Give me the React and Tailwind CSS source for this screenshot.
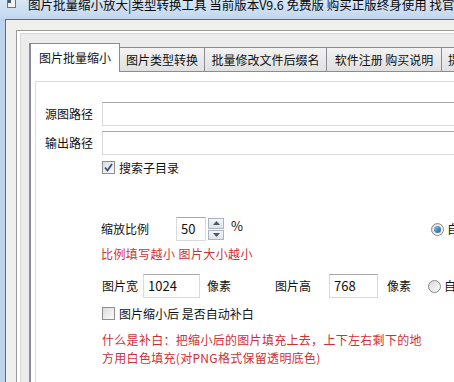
import React from "react";

const font = { fontFamily: '"Noto Sans CJK SC", "Noto Sans", sans-serif' };

const CheckBox = ({ checked }) => (
	<div className="w-[13px] h-[13px] shrink-0 border border-[#8e8f8f] bg-gradient-to-br from-[#dcdcdc] to-[#fbfbfb] flex items-center justify-center">
		{checked && (
			<svg width="11" height="11" viewBox="0 0 11 11">
				<path d="M2 5.5 L4.5 8.5 L9 2" fill="none" stroke="#3a4f86" strokeWidth="1.8" />
			</svg>
		)}
	</div>
);

const Radio = ({ checked }) => (
	<div className="w-[13px] h-[13px] shrink-0 rounded-full border border-[#8a8a8a] bg-gradient-to-br from-[#d9d9d9] to-[#fdfdfd] flex items-center justify-center">
		{checked && <div className="w-[7px] h-[7px] rounded-full bg-gradient-to-br from-[#8cc2ea] to-[#1d5b94]" />}
	</div>
);

const TextBox = ({ className, value }) => (
	<div
		className={`h-[24px] shrink-0 border border-[#dadada] border-t-[#a8a8a8] bg-white flex items-center text-[13px] text-[#111] ${className}`}>
		{value}
	</div>
);

const Spinner = () => (
	<div className="ml-[2px] w-[16px] h-[22px] shrink-0 flex flex-col gap-[1px]">
		<div className="flex-1 border border-[#a9b4c2] bg-gradient-to-b from-[#f4f6f8] to-[#dde3ea] flex items-center justify-center">
			<svg width="7" height="4" viewBox="0 0 7 4">
				<path d="M0 4 L3.5 0 L7 4 Z" fill="#4d5866" />
			</svg>
		</div>
		<div className="flex-1 border border-[#a9b4c2] bg-gradient-to-b from-[#f4f6f8] to-[#dde3ea] flex items-center justify-center">
			<svg width="7" height="4" viewBox="0 0 7 4">
				<path d="M0 0 L3.5 4 L7 0 Z" fill="#4d5866" />
			</svg>
		</div>
	</div>
);

const tabs = [
	{ label: "图片类型转换", w: "w-[85px] justify-center" },
	{ label: "批量修改文件后缀名", w: "w-[122px] justify-center" },
	{ label: "软件注册 购买说明", w: "w-[115px] justify-center" },
	{ label: "提示信息", w: "w-[70px] justify-start pl-[6px]" },
];

export default function App() {
	return (
		<div className="w-[454px] h-[382px] overflow-hidden bg-[#bcd4ec] text-[12px] text-[#111]" style={font}>
			{/* title bar */}
			<div className="h-[19px] bg-gradient-to-b from-[#d7e6f5] to-[#c2d7ee] flex items-start pl-[7px] whitespace-nowrap overflow-hidden">
				<svg width="9" height="8" viewBox="0 0 9 8" className="shrink-0">
					<rect x="0.5" y="-0.5" width="8" height="8" fill="#f4f4f4" stroke="#6b7480" />
					<rect x="1" y="0" width="3" height="3" fill="#4a5a72" />
				</svg>
				<span className="ml-[12px] shrink-0 text-[12.5px] leading-none mt-[-1px] text-[#0a0a0a]">
					图片批量缩小放大|类型转换工具 当前版本V9.6 免费版 购买正版终身使用 找官方
				</span>
			</div>

			<div className="pl-[5px] h-[363px]">
				<div className="h-full border-l border-t border-[#5f6b78] bg-[#f0efeb] pl-[10px] pt-[10px]">
					<div className="h-full border-l border-t border-[#9a9a9a] bg-white pl-[3px] pt-[2px]">
						<div className="h-full w-[700px] border-l border-t border-[#d8d8d8] bg-[#ececec] pl-[8px] pt-[9px]">
							{/* tabs */}
							<div className="flex items-end h-[28px] relative z-10">
								<div className="w-[91px] h-[29px] -mb-px shrink-0 border-l-2 border-t border-r border-[#898c95] bg-white flex items-start justify-center pt-[6px] leading-[16px]">
									图片批量缩小
								</div>
								{tabs.map((t) => (
									<div
										key={t.label}
										className={`${t.w} h-[24px] shrink-0 border-t border-r border-[#898c95] bg-gradient-to-b from-[#f3f3f3] to-[#e0e0e0] flex items-center leading-[16px] pt-[1px] whitespace-nowrap`}>
										{t.label}
									</div>
								))}
							</div>

							{/* panel */}
							<div className="h-[320px] border-l-2 border-t border-[#898c95] bg-white pl-[4px] pt-[9px]">
								<div className="h-full border-l border-t border-[#dcdcdc] bg-white">
									<div className="flex items-center mt-[20px] h-[23px] pl-[9px]">
										<span className="w-[57px] leading-none">源图路径</span>
										<TextBox className="flex-1 h-[23px]" />
									</div>
									<div className="flex items-center mt-[6px] h-[24px] pl-[9px]">
										<span className="w-[57px] leading-none">输出路径</span>
										<TextBox className="flex-1" />
									</div>
									<div className="flex items-center mt-[6px] pl-[66px]">
										<CheckBox checked />
										<span className="ml-[4px] leading-none">搜索子目录</span>
									</div>

									<div className="flex items-center mt-[43px] pl-[65px] whitespace-nowrap">
										<span className="w-[75px] leading-none">缩放比例</span>
										<TextBox className="w-[30px] h-[22px] pl-[4px]" value="50" />
										<Spinner />
										<span className="ml-[7px] -mt-[7px] text-[13px] leading-none">%</span>
										<div className="ml-[188px]">
											<Radio checked />
										</div>
										<span className="ml-[3px] leading-none">自定义比例</span>
									</div>
									<div className="mt-[5px] pl-[65px] leading-[16px] tracking-[0.4px] text-[#cf2f35]">
										比例填写越小 图片大小越小
									</div>

									<div className="flex items-center mt-[12px] pl-[66px] whitespace-nowrap">
										<span className="leading-none">图片宽</span>
										<TextBox className="ml-[5px] w-[57px] pl-[4px]" value="1024" />
										<span className="ml-[7px] leading-none">像素</span>
										<span className="ml-[44px] leading-none">图片高</span>
										<TextBox className="ml-[18px] w-[49px] pl-[4px]" value="768" />
										<span className="ml-[9px] leading-none">像素</span>
										<div className="ml-[17px]">
											<Radio />
										</div>
										<span className="ml-[3px] leading-none">自定义宽高</span>
									</div>

									<div className="flex items-center mt-[9px] pl-[66px]">
										<CheckBox />
										<span className="ml-[4px] leading-none">图片缩小后 是否自动补白</span>
									</div>

									<div className="mt-[11px] pl-[66px] leading-[18px] tracking-[0.3px] text-[#cf2f35] whitespace-nowrap">
										什么是补白：把缩小后的图片填充上去，上下左右剩下的地
										<br />
										方用白色填充(对PNG格式保留透明底色)
									</div>
								</div>
							</div>
						</div>
					</div>
				</div>
			</div>
		</div>
	);
}
